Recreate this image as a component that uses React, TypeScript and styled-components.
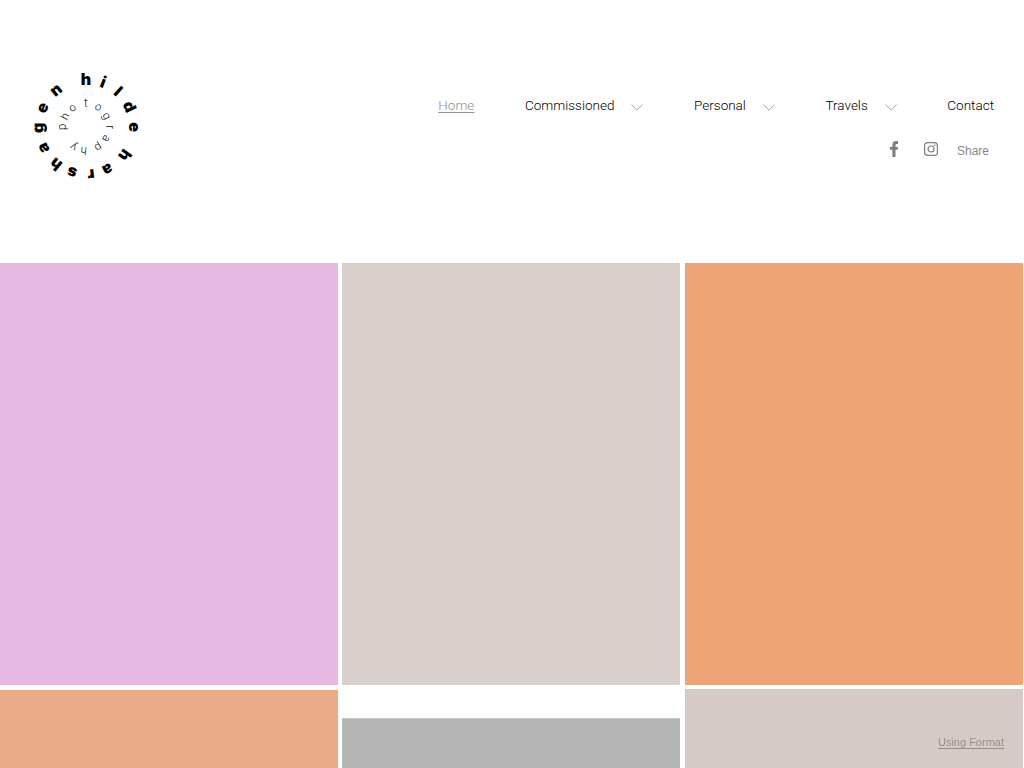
import styled, { createGlobalStyle } from 'styled-components';

const GlobalStyle = createGlobalStyle`
  html, body {
    margin: 0;
    height: 768px;
    overflow: hidden;
    background: #fff;
  }
`;

const outerLetters: [string, number][] = [
  ['h', 0], ['i', 21], ['l', 42], ['d', 65], ['e', 90],
  ['h', 126], ['a', 153], ['r', 174], ['s', 197], ['h', 219],
  ['a', 244], ['g', 269], ['e', 294], ['n', 321],
];

const innerLetters: [string, number][] = [
  ['p', 270], ['h', 297], ['o', 325], ['t', 0], ['o', 32], ['g', 62],
  ['r', 90], ['a', 120], ['p', 149], ['h', 186], ['y', 212],
];

function Logo() {
  return (
    <LogoSvg viewBox="0 0 124 124" aria-label="hilde harshagen photography">
      {outerLetters.map(([letter, angle], i) => (
        <OuterLetter key={i} x="62" y="20.5" textAnchor="middle" transform={`rotate(${angle} 62 63)`}>
          {letter}
        </OuterLetter>
      ))}
      {innerLetters.map(([letter, angle], i) => (
        <InnerLetter key={i} x="62" y="43" textAnchor="middle" transform={`rotate(${angle} 62 63)`}>
          {letter}
        </InnerLetter>
      ))}
    </LogoSvg>
  );
}

function Chevron() {
  return (
    <ChevronSvg viewBox="0 0 12 7">
      <path d="M0.5 0.5 L6 6.2 L11.5 0.5" fill="none" stroke="#a8a8a8" strokeWidth="1" />
    </ChevronSvg>
  );
}

export default function App() {
  return (
    <>
      <GlobalStyle />
      <Header>
        <Logo />
        <HeaderRight>
          <Nav>
            <NavLink $active>Home</NavLink>
            <NavItem>
              <NavLink>Commissioned</NavLink>
              <Chevron />
            </NavItem>
            <NavItem>
              <NavLink>Personal</NavLink>
              <Chevron />
            </NavItem>
            <NavItem>
              <NavLink>Travels</NavLink>
              <Chevron />
            </NavItem>
            <NavLink>Contact</NavLink>
          </Nav>
          <Social>
            <svg width="8" height="16" viewBox="0 0 8 16">
              <path
                d="M5.500 16V8.800h2.100l.4-2.900H5.500V4.200c0-.8.200-1.300 1.300-1.300H8V.2C7.700.1 6.900 0 6 0 4 0 2.400 1.300 2.400 3.700v2.200H0v2.900h2.400V16z"
                fill="#7d7d7d"
              />
            </svg>
            <svg width="14" height="14" viewBox="0 0 14 14">
              <rect x="0.6" y="0.6" width="12.800" height="12.800" rx="3.200" fill="none" stroke="#7d7d7d" strokeWidth="1.200" />
              <circle cx="7" cy="7" r="3" fill="none" stroke="#7d7d7d" strokeWidth="1.200" />
              <circle cx="10.700" cy="3.300" r="0.800" fill="#7d7d7d" />
            </svg>
            <ShareLabel>Share</ShareLabel>
          </Social>
        </HeaderRight>
      </Header>
      <Gallery>
        <Column>
          <Tile $color="#e6b9e2" $height={422} />
          <Tile $color="#eaab88" $height={78} $gap={5} />
        </Column>
        <Column>
          <Tile $color="#d9d0cd" $height={422} />
          <GreyTile $color="#b5b5b5" $height={50} $gap={33} />
        </Column>
        <Column $shift={1}>
          <Tile $color="#eea476" $height={422} />
          <Tile $color="#d5cac5" $height={79} $gap={4} />
        </Column>
      </Gallery>
      <FormatLink>Using Format</FormatLink>
    </>
  );
}

const Header = styled.header`
  box-sizing: border-box;
  height: 263px;
  display: flex;
  justify-content: space-between;
  align-items: flex-start;
  padding: 64px 30px 0 24px;
  font-family: 'Roboto', 'Liberation Sans', sans-serif;
`;

const LogoSvg = styled.svg`
  width: 124px;
  height: 124px;
`;

const OuterLetter = styled.text`
  font-family: 'Inter', 'Liberation Sans', sans-serif;
  font-size: 16px;
  font-weight: 900;
  fill: #000;
`;

const InnerLetter = styled.text`
  font-family: 'Inter', 'Liberation Sans', sans-serif;
  font-size: 11px;
  font-weight: 300;
  fill: #222;
`;

const HeaderRight = styled.div`
  display: flex;
  flex-direction: column;
  align-items: flex-end;
  padding-top: 33px;
`;

const Nav = styled.nav`
  display: flex;
  align-items: center;
  gap: 50.6px;
  height: 17px;
`;

const NavItem = styled.div`
  display: flex;
  align-items: center;
  gap: 17px;
`;

const NavLink = styled.a<{ $active?: boolean }>`
  font-size: 13.5px;
  font-weight: 300;
  line-height: 17px;
  color: ${(p) => (p.$active ? '#8f8f8f' : '#000')};
  text-decoration: ${(p) => (p.$active ? 'underline' : 'none')};
  text-underline-offset: 2px;
  text-decoration-thickness: 1px;
`;

const ChevronSvg = styled.svg`
  width: 12px;
  height: 7px;
  margin-top: 3px;
`;

const Social = styled.div`
  display: flex;
  align-items: center;
  margin-top: 25px;
  padding-right: 5px;
  height: 20px;

  svg:first-child {
    margin-right: 26px;
  }

  svg:nth-child(2) {
    margin-right: 19px;
  }
`;

const ShareLabel = styled.span`
  font-family: 'Liberation Sans', Arial, sans-serif;
  font-size: 12px;
  color: #888;
  margin-top: 3px;
`;

const Gallery = styled.main`
  display: grid;
  grid-template-columns: 338px 338px 339px;
  column-gap: 4px;
`;

const Column = styled.div<{ $shift?: number }>`
  display: flex;
  flex-direction: column;
  margin-left: ${(p) => p.$shift ?? 0}px;
`;

const Tile = styled.div<{ $color: string; $height: number; $gap?: number }>`
  background: ${(p) => p.$color};
  height: ${(p) => p.$height}px;
  margin-top: ${(p) => p.$gap ?? 0}px;
  flex: none;
`;

const GreyTile = styled(Tile)`
  border-top: 1px solid #c6c6c6;
  box-sizing: border-box;
`;

const FormatLink = styled.a`
  position: fixed;
  right: 20px;
  bottom: 19px;
  font-family: 'Liberation Sans', Arial, sans-serif;
  font-size: 11px;
  line-height: 13px;
  color: #968f8c;
  text-decoration: underline;
  text-underline-offset: 2px;
`;
